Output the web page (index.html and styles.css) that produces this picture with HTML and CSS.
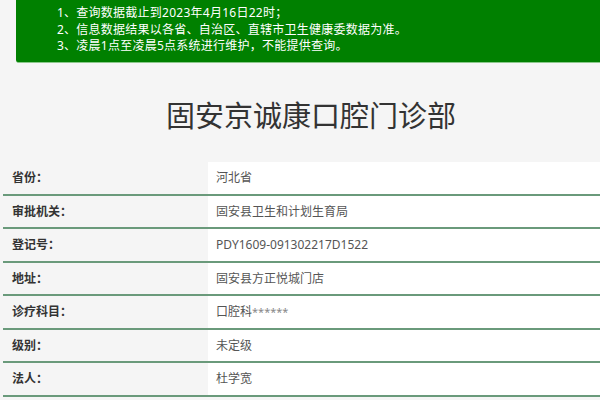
FILE: index.html
```html
<!DOCTYPE html>
<html lang="zh-CN">
<head>
<meta charset="utf-8">
<link rel="stylesheet" href="styles.css">
</head>
<body>
<div class="page">
  <div class="notice">
    <p>1、查询数据截止到2023年4月16日22时；</p>
    <p>2、信息数据结果以各省、自治区、直辖市卫生健康委数据为准。</p>
    <p>3、凌晨1点至凌晨5点系统进行维护，不能提供查询。</p>
  </div>
  <h1 class="title">固安京诚康口腔门诊部</h1>
  <div class="info">
    <div class="row"><div class="label">省份：</div><div class="value">河北省</div></div>
    <div class="row"><div class="label">审批机关：</div><div class="value">固安县卫生和计划生育局</div></div>
    <div class="row"><div class="label">登记号：</div><div class="value">PDY1609-091302217D1522</div></div>
    <div class="row"><div class="label">地址：</div><div class="value">固安县方正悦城门店</div></div>
    <div class="row"><div class="label">诊疗科目：</div><div class="value">口腔科<span class="mask">******</span></div></div>
    <div class="row"><div class="label">级别：</div><div class="value">未定级</div></div>
    <div class="row"><div class="label">法人：</div><div class="value">杜学宽</div></div>
  </div>
</div>
</body>
</html>
```

FILE: styles.css
```css
html, body {
  margin: 0;
  padding: 0;
  background: #f5f5f5;
  overflow: hidden;
}
body {
  font-family: "Noto Sans", "Noto Sans CJK SC", sans-serif;
  color: #333;
}
.page {
  width: 616px;
  margin-left: 3px;
}
.notice {
  margin-left: 13px;
  background: #008000;
  color: #fff;
  padding: 5px 0 7px 41px;
  border-bottom: 1px solid #8cc88c;
  border-bottom-left-radius: 3px;
  font-size: 12px;
  letter-spacing: 0.25px;
  line-height: 16.5px;
}
.notice p {
  margin: 0;
}
.title {
  margin: 31px 0 28.5px;
  text-align: center;
  font-size: 29px;
  font-weight: 400;
  line-height: 40px;
  color: #333;
  font-family: "Noto Sans CJK SC", sans-serif;
}
.info {
  display: flex;
  flex-direction: column;
}
.row {
  display: grid;
  grid-template-columns: 205px 1fr;
  border-bottom: 2px solid #6a9a7b;
}
.label {
  padding-left: 9px;
  height: 31.5px;
  line-height: 31.5px;
  font-size: 12px;
  font-weight: 700;
  color: #333;
}
.value {
  background: #fff;
  padding-left: 8px;
  height: 31.5px;
  line-height: 31.5px;
  font-size: 12px;
  color: #555;
}
.mask {
  color: #888;
  font-size: 11px;
}
```
